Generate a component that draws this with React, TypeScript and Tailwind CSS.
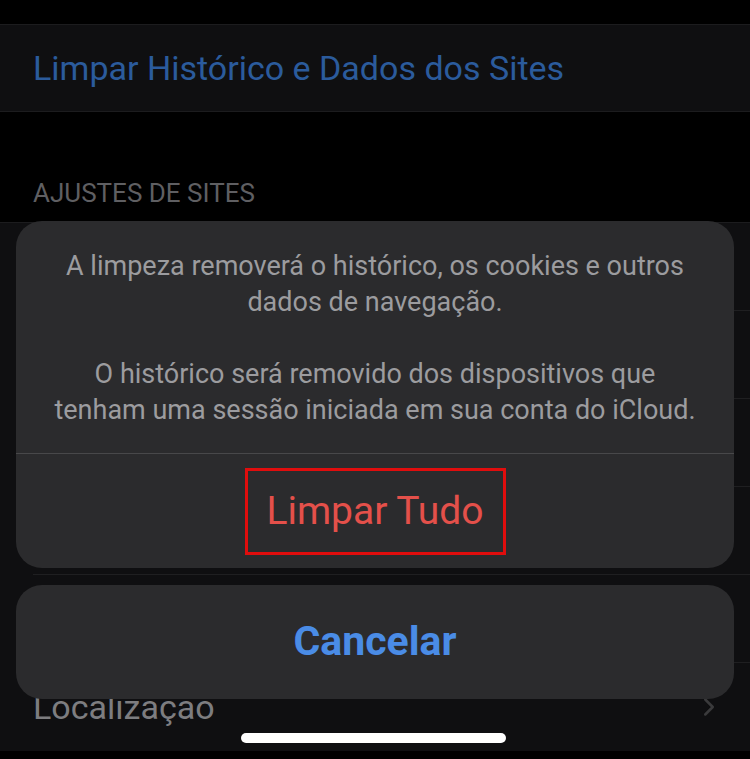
import { ChevronRight } from 'lucide-react';

const font = { fontFamily: 'Roboto, "Liberation Sans", sans-serif' };

function Row({ children, last }: { children?: React.ReactNode; last?: boolean }) {
  return (
    <div className="h-[88px] flex items-center pl-[33px] relative">
      {children}
      {!last && <div className="absolute left-[33px] right-0 bottom-0 h-px bg-[#1f1f21]" />}
    </div>
  );
}

export default function App() {
  return (
    <div className="w-[750px] h-[759px] bg-black relative overflow-hidden" style={font}>
      {/* Settings list behind the sheet */}
      <div className="pt-[24px]">
        <div className="h-[88px] bg-[#0f0f11] border-y border-[#1c1c1e] flex items-center pl-[33px]">
          <span className="text-[34px] text-[#2b5b9c]">Limpar Histórico e Dados dos Sites</span>
        </div>
        <div className="h-[110px] flex items-end pl-[33px] pb-[9px]">
          <span className="text-[26px] text-[#5f5f62] uppercase">Ajustes de Sites</span>
        </div>
        <div className="bg-[#0f0f11] border-t border-[#1c1c1e]">
          <Row />
          <Row />
          <Row />
          <Row />
          <Row />
          <Row last>
            <span className="text-[34px] text-[#7d7d80]">Localização</span>
            <ChevronRight className="absolute right-[26px] top-[29px] w-[30px] h-[30px] text-[#3a3a3c]" strokeWidth={2} />
          </Row>
        </div>
      </div>

      {/* Action sheet overlay */}
      <div className="absolute left-[16px] right-[16px] top-[221px] flex flex-col gap-[17px]">
        <div className="bg-[#2b2b2d] rounded-[26px] overflow-hidden">
          <div className="px-[20px] pt-[27px] pb-[25px] text-center text-[27px] leading-[36px] text-[#9c9c9f] whitespace-nowrap">
            <p>
              A limpeza removerá o histórico, os cookies e outros
              <br />
              dados de navegação.
            </p>
            <p className="mt-[36px]">
              O histórico será removido dos dispositivos que
              <br />
              tenham uma sessão iniciada em sua conta do iCloud.
            </p>
          </div>
          <div className="h-px bg-[#48484a]" />
          <div className="h-[114px] flex items-center justify-center">
            <div className="w-[261px] h-[87px] border-[3px] border-[#e00d0d] flex items-center justify-center">
              <span className="text-[39px] text-[#e4504a]">Limpar Tudo</span>
            </div>
          </div>
        </div>
        <div className="bg-[#2b2b2d] rounded-[26px] h-[114px] flex items-center justify-center">
          <span className="text-[41px] font-bold text-[#4a8ce6]">Cancelar</span>
        </div>
      </div>

      {/* Home indicator */}
      <div className="absolute left-[241px] top-[733px] w-[265px] h-[10px] rounded-full bg-white" />
    </div>
  );
}
